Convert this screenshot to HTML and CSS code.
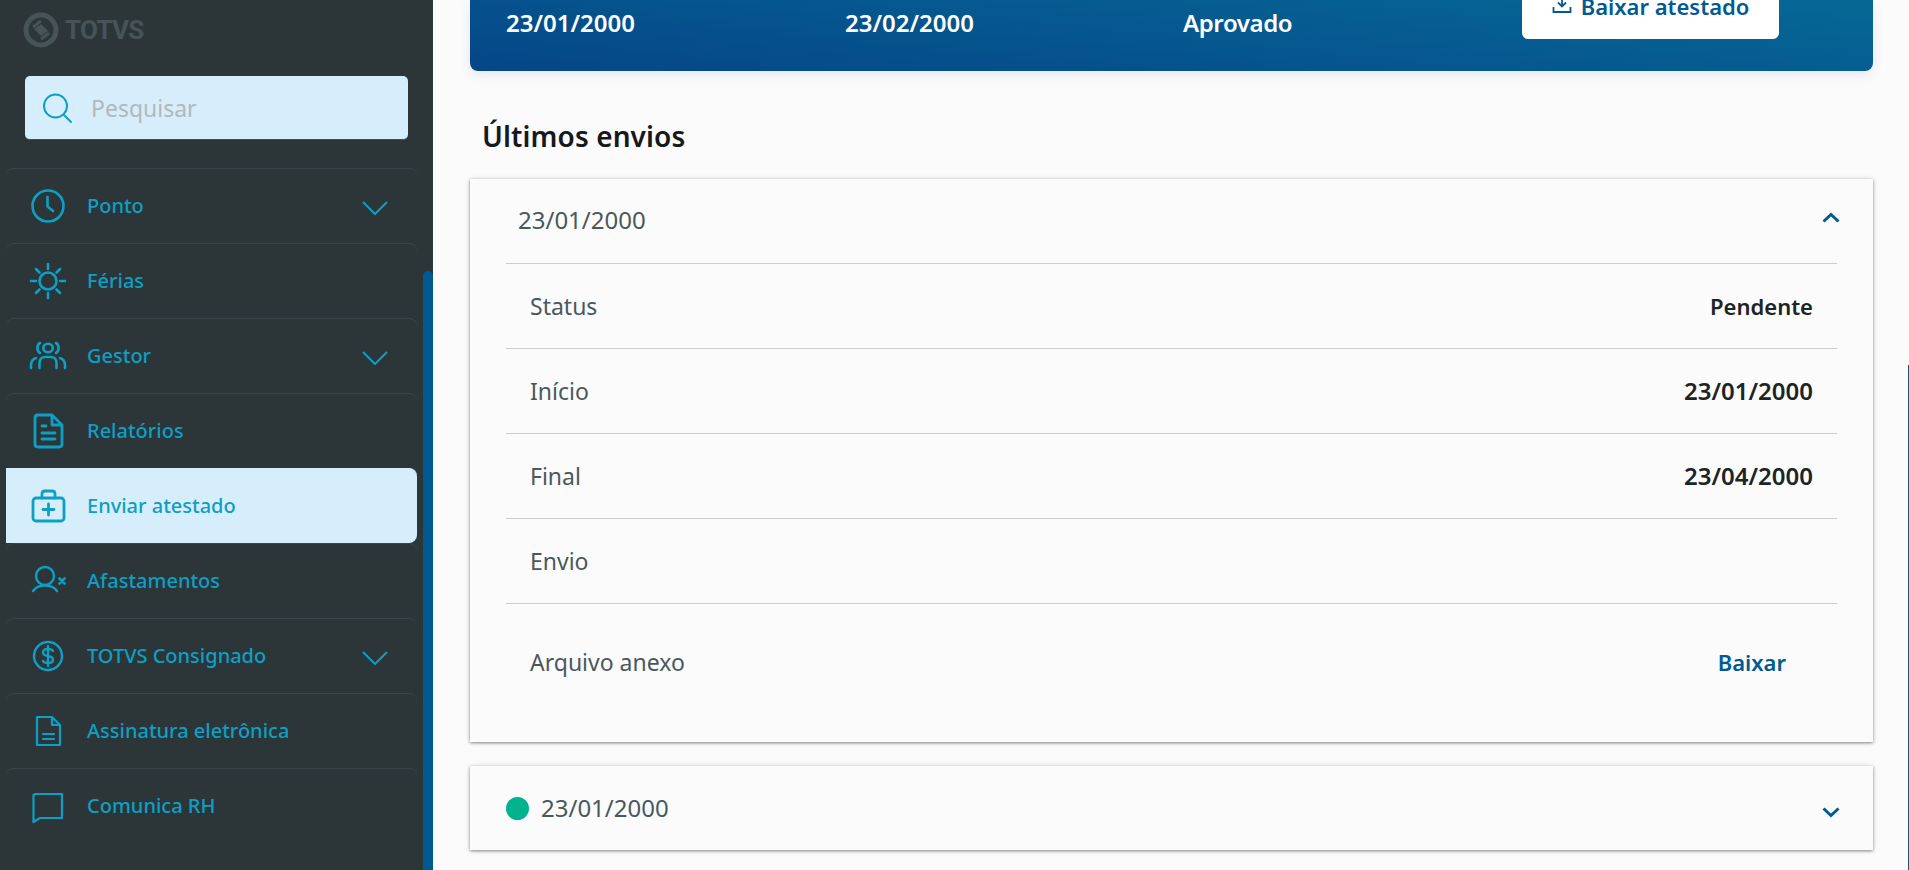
FILE: index.html
```html
<!DOCTYPE html>
<html lang="pt-BR">
<head>
<meta charset="utf-8">
<title>Enviar atestado</title>
<link rel="stylesheet" href="styles.css">
</head>
<body>
<div class="app">
  <aside class="sidebar">
    <div class="logo">
      <svg class="logo-mark" viewBox="0 0 36 36" width="36" height="36">
        <circle cx="18" cy="18" r="15" fill="none" stroke="#465458" stroke-width="5"/>
        <path d="M10 15 L18 9 M26 21 L18 27" fill="none" stroke="#465458" stroke-width="3"/>
        <path d="M11 17 L18 12 L25 19 L18 24 Z" fill="#465458"/>
      </svg>
      <span class="logo-text">TOTVS</span>
    </div>
    <div class="search">
      <svg viewBox="0 0 32 32" width="32" height="32" class="search-icon">
        <circle cx="14.5" cy="14" r="11.5" fill="none" stroke="currentColor" stroke-width="2"/>
        <path d="M23 23 L30 30" fill="none" stroke="currentColor" stroke-width="2" stroke-linecap="round"/>
      </svg>
      <span class="placeholder">Pesquisar</span>
    </div>
    <nav class="menu">
      <a class="item">
        <svg class="ic" viewBox="0 0 40 40"><circle cx="20" cy="20" r="15.5" stroke-width="2.6"/><path d="M19.5 11 V20.5 L25 25" stroke-width="2.6"/></svg>
        <span class="label">Ponto</span>
        <svg class="chev" viewBox="0 0 26 14"><path d="M1 1 L13 13 L25 1"/></svg>
      </a>
      <a class="item">
        <svg class="ic" viewBox="0 0 40 40"><circle cx="20" cy="20" r="8.5" stroke-width="2.6"/><path d="M20 3 V8 M20 32 V37 M3 20 H8 M32 20 H37 M8 8 L11.5 11.5 M28.5 28.5 L32 32 M8 32 L11.5 28.5 M28.5 11.5 L32 8" stroke-width="2.6"/></svg>
        <span class="label">Férias</span>
      </a>
      <a class="item">
        <svg class="ic" viewBox="0 0 40 40"><ellipse cx="20" cy="12" rx="4.800" ry="4.300" stroke-width="2.600"/><path d="M12 7 C8.500 9 8.500 15 12 17 M28 7 C31.500 9 31.500 15 28 17 M11.500 32 V27 C11.500 23 14 21 17 21 H23 C26 21 28.500 23 28.500 27 V32 M3 32 V29 C3 25 5 23 8 22 M37 32 V29 C37 25 35 23 32 22" stroke-width="2.600"/></svg>
        <span class="label">Gestor</span>
        <svg class="chev" viewBox="0 0 26 14"><path d="M1 1 L13 13 L25 1"/></svg>
      </a>
      <a class="item">
        <svg class="ic" viewBox="0 0 40 40"><path d="M10 4 H24 L34 14 V33 C34 35 33 36 31 36 H10 C8 36 7 35 7 33 V7 C7 5 8 4 10 4 Z M24 4 V14 H34" stroke-width="2.8"/><path d="M14 15 H18 M14 22 H27 M14 28 H27" stroke-width="2.8"/></svg>
        <span class="label">Relatórios</span>
      </a>
      <a class="item active">
        <svg class="ic" viewBox="0 0 40 40"><rect x="5" y="12" width="31" height="23" rx="3" stroke-width="2.8"/><path d="M14 12 V8 C14 6 15 5 17 5 H24 C26 5 27 6 27 8 V12 M20.500 18 V29 M15 23.500 H26" stroke-width="2.8"/></svg>
        <span class="label">Enviar atestado</span>
      </a>
      <a class="item">
        <svg class="ic" viewBox="0 0 40 40"><circle cx="17" cy="15" r="9" stroke-width="2.400"/><path d="M5 30 C8 25.500 13 24.500 17 24.500 C21 24.500 26 25.500 29 30" stroke-width="2.400"/><path d="M31.500 17.500 L36.500 22.500 M36.500 17.500 L31.500 22.500" stroke-width="2.600"/></svg>
        <span class="label">Afastamentos</span>
      </a>
      <a class="item">
        <svg class="ic" viewBox="0 0 40 40"><circle cx="20" cy="20" r="14" stroke-width="2.4"/><path d="M25 15 C24 13 22 13 20 13 C17 13 15 14 15 16.500 C15 19 17 19.500 20 20 C23 20.500 25 21 25 23.500 C25 26 23 27 20 27 C18 27 16 27 15 25 M20 10 V30" stroke-width="2.4"/></svg>
        <span class="label">TOTVS Consignado</span>
        <svg class="chev" viewBox="0 0 26 14"><path d="M1 1 L13 13 L25 1"/></svg>
      </a>
      <a class="item">
        <svg class="ic" viewBox="0 0 40 40"><path d="M9 6 H24 L32 14 V34 H9 Z M24 6 V14 H32" stroke-width="2.2"/><path d="M15 23 H26 M15 28 H26" stroke-width="2.2"/></svg>
        <span class="label">Assinatura eletrônica</span>
      </a>
      <a class="item">
        <svg class="ic" viewBox="0 0 40 40"><path d="M7 8 H34 V32 H12 L5.500 36 V9 Z" stroke-width="2.2"/></svg>
        <span class="label">Comunica RH</span>
      </a>
    </nav>
    <div class="thumb"></div>
  </aside>
  <main class="content">
    <section class="banner">
      <span class="b-col b-first">23/01/2000</span>
      <span class="b-col b-second">23/02/2000</span>
      <span class="b-col b-third">Aprovado</span>
      <button class="download">
        <svg viewBox="0 0 20 20" width="20" height="20"><path d="M10 1 V11 M6 7.500 L10 11.500 L14 7.500 M1.500 12 V17 H18.500 V12" fill="none" stroke="currentColor" stroke-width="1.800"/></svg>
        <span>Baixar atestado</span>
      </button>
    </section>
    <h2 class="title">Últimos envios</h2>
    <section class="card">
      <header class="card-head">
        <span class="date">23/01/2000</span>
        <svg class="toggle" viewBox="0 0 18 11"><path d="M1.500 9.500 L9 2.500 L16.500 9.500"/></svg>
      </header>
      <div class="row"><span class="key">Status</span><span class="val val-word">Pendente</span></div>
      <div class="row"><span class="key">Início</span><span class="val">23/01/2000</span></div>
      <div class="row"><span class="key">Final</span><span class="val">23/04/2000</span></div>
      <div class="row"><span class="key">Envio</span></div>
      <div class="row attach"><span class="key">Arquivo anexo</span><a class="link">Baixar</a></div>
    </section>
    <section class="card closed">
      <header class="card-head">
        <span class="dot"></span>
        <span class="date">23/01/2000</span>
        <svg class="toggle" viewBox="0 0 18 11"><path d="M1.500 1.500 L9 8.500 L16.500 1.500"/></svg>
      </header>
    </section>
  </main>
</div>
<div class="edge"></div>
</body>
</html>
```
FILE: styles.css
```css
* { box-sizing: border-box; }
html, body { margin: 0; height: 100%; overflow: hidden; }
body { font-family: "Noto Sans", "Lato", sans-serif; background: #fbfbfc; color: #1d2426; }
.app { display: flex; height: 870px; }

.sidebar { position: relative; flex: 0 0 433px; background: #2c3639; padding-top: 12px; overflow: hidden; }
.logo { display: flex; align-items: center; gap: 6px; height: 36px; padding-left: 23px; }
.logo-text { font-family: "Roboto", sans-serif; font-weight: 700; font-size: 26px; letter-spacing: -.7px; color: #465458; }
.search { display: flex; align-items: center; gap: 18px; height: 64px; margin: 28px 25px 0; padding-left: 16px; background: #d6eefc; border-radius: 5px; border-bottom: 1px solid #0b5c8c; color: #0d9fc4; }
.placeholder { font-size: 23px; line-height: 30px; color: #b3b8ba; }
.menu { margin: 28px 16px 0 6px; display: flex; flex-direction: column; }
.item { display: flex; align-items: center; height: 75px; padding: 0 29px 0 22px; border-top: 1px solid #3a474a; border-radius: 8px 8px 0 0; color: #0d9fc4; font-size: 20px; font-weight: 500; line-height: 24px; }
.item.active { background: #d6eefc; border-radius: 0 8px 8px 0; border-top-color: #d6eefc; }
.ic { width: 40px; height: 40px; flex: none; fill: none; stroke: currentColor; stroke-linejoin: round; stroke-linecap: round; margin-right: 19px; }
.label { flex: 1; white-space: nowrap; padding-bottom: 1px; }
.chev { width: 26px; height: 14px; fill: none; stroke: currentColor; stroke-width: 2; flex: none; margin-top: 3px; }
.thumb { position: absolute; top: 271px; right: 0; bottom: 0; width: 10px; background: #005a92; border-radius: 5px 5px 0 0; }

.content { flex: 1; min-width: 0; padding: 0 36px 0 37px; }
.banner { display: flex; align-items: flex-start; height: 71px; padding: 0 94px 0 36px; border-radius: 0 0 8px 8px; background: linear-gradient(6deg, #054688, #066896); box-shadow: 0 4px 12px rgba(40, 60, 110, .1); color: #fff; font-size: 24px; font-weight: 600; }
.b-col { line-height: 46px; white-space: nowrap; }
.b-first { width: 339px; }
.b-second { width: 338px; }
.b-third { flex: 1; letter-spacing: -.4px; }
.download { display: flex; justify-content: center; align-items: flex-end; gap: 9px; flex: none; width: 257px; height: 39px; padding: 0 0 21px; border: 0; border-radius: 0 0 6px 6px; background: #fff; color: #005b92; font: 600 22px "Noto Sans", sans-serif; line-height: 23px; }
.download svg { margin-bottom: 3px; }
.title { margin: 0; padding: 46px 12px 0; height: 108px; font-size: 28px; font-weight: 600; line-height: 38px; letter-spacing: .1px; color: #15191b; }

.card { background: #fbfbfc; box-shadow: 0 1px 3px rgba(0, 0, 0, .45), 0 0 8px rgba(0, 0, 0, .08); padding: 0 36px; height: 563px; }
.card.closed { height: 84px; margin-top: 24px; }
.card-head { display: flex; align-items: center; height: 84px; padding: 0 0 0 12px; color: #4a585c; font-size: 24px; }
.closed .card-head { padding-left: 0; }
.date { line-height: 30px; margin-top: -2px; }
.closed .date { margin-top: 0; }
.toggle { width: 18px; height: 11px; margin-left: auto; margin-right: -3px; fill: none; stroke: #005b92; stroke-width: 3; margin-top: -8px; }
.closed .toggle { margin-top: 8px; }
.dot { width: 23px; height: 23px; border-radius: 50%; background: #00b28e; margin-right: 12px; }
.row { display: flex; justify-content: space-between; align-items: center; height: 85px; padding: 0 24px; border-top: 1px solid #c9cbcc; font-size: 23px; line-height: 30px; color: #4a585c; }
.val { color: #1d2426; font-weight: 600; font-size: 24px; }
.val-word { font-size: 22px; }
.attach { height: 116px; padding-right: 51px; }
.link { color: #005b92; font-weight: 600; font-size: 22px; }
.edge { position: absolute; top: 365px; right: 0; bottom: 0; width: 1px; background: #005a92; }
```
